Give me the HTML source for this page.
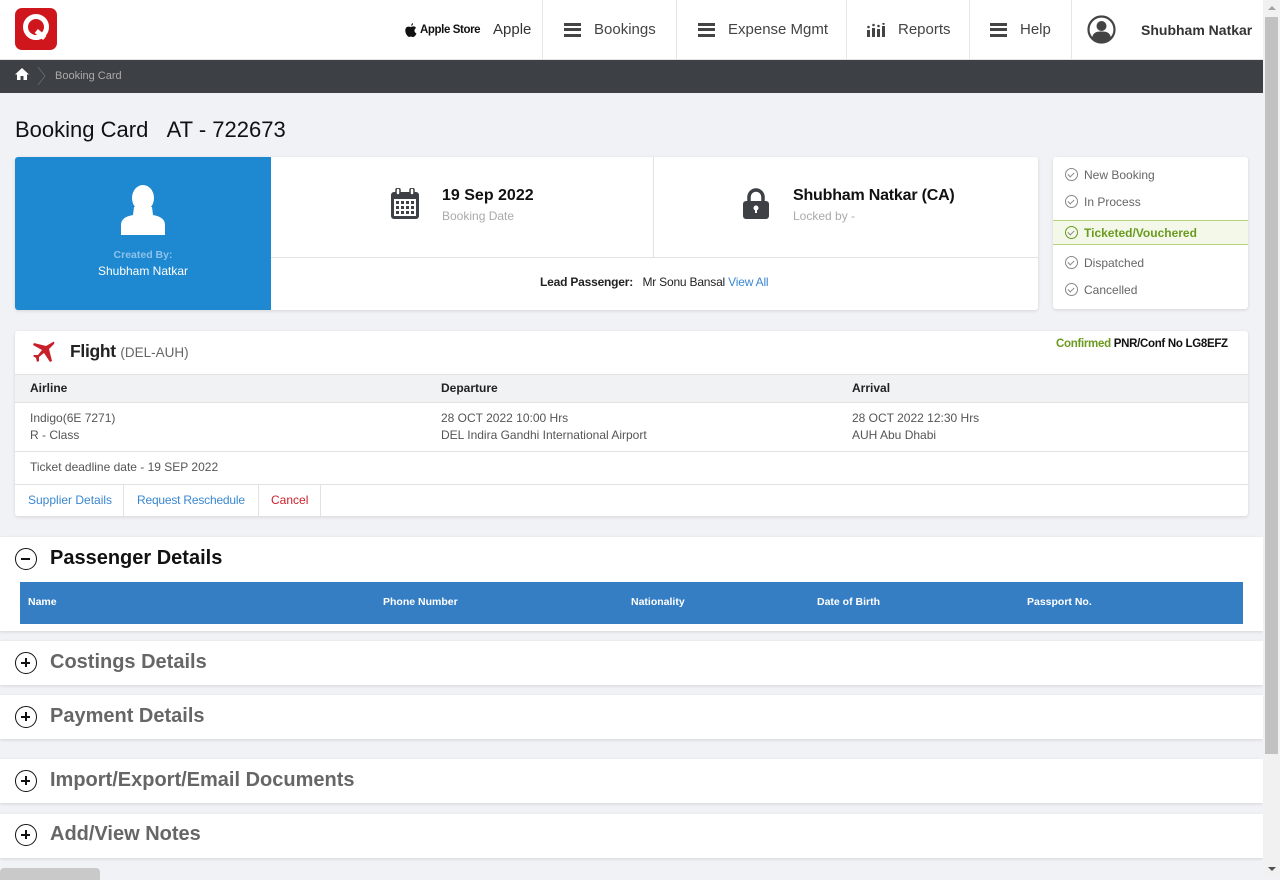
<!DOCTYPE html>
<html><head><meta charset="utf-8">
<style>
*{box-sizing:border-box;margin:0;padding:0}
body{width:1280px;height:878px;overflow:hidden;background:#f1f2f6;font-family:"Liberation Sans",sans-serif;position:relative;color:#333}
.a{position:absolute}
.hdr{left:0;top:0;width:1263px;height:60px;background:#fff;border-bottom:1px solid #e3e3e3}
.nav{top:0;height:59px;border-left:1px solid #e6e6e6;display:flex;align-items:center;font-size:15px;color:#444}
.ham{display:inline-block;width:17px;height:14px;border-top:3px solid #444;border-bottom:3px solid #444;position:relative;margin-right:13px}
.ham:after{content:"";position:absolute;left:0;right:0;top:2.5px;height:3px;background:#444}
.crumb{left:0;top:60px;width:1263px;height:33px;background:#3d4145}
.card{background:#fff;border-radius:3px;box-shadow:0 1px 3px rgba(0,0,0,.12)}
.st{left:1053px;width:195px;height:27px;font-size:12px;color:#666;display:flex;align-items:center;padding-left:12px}
.ck{width:13px;height:13px;border:1.5px solid #888;border-radius:50%;margin-right:6px;position:relative}
.ck:after{content:"";position:absolute;left:3px;top:1.5px;width:3px;height:5px;border-right:1.5px solid #888;border-bottom:1.5px solid #888;transform:rotate(45deg)}
.sec{left:0;width:1263px;background:#fff;box-shadow:0 1px 3px rgba(0,0,0,.12)}
.sec .t{position:absolute;left:50px;font-size:20px;font-weight:bold;color:#666}
.pl{position:absolute;left:15px;width:22px;height:22px;border:1.5px solid #111;border-radius:50%}
.pl:before{content:"";position:absolute;left:5px;top:9px;width:9px;height:1.5px;background:#111}
.pl.p:after{content:"";position:absolute;left:9px;top:5px;width:1.5px;height:9px;background:#111}
.th{font-size:12px;font-weight:bold;color:#222}
.sm{font-size:12px;color:#555}
</style></head><body>
<div class="a hdr"></div>
<div class="a" style="left:15px;top:8px;width:42px;height:42px;background:#d0161d;border-radius:7px"></div>
<div class="a" style="left:23px;top:14px;width:26px;height:26px;border:5px solid #fff;border-radius:50%"></div>
<div class="a" style="left:35px;top:32px;width:11px;height:5px;background:#fff;transform:rotate(40deg)"></div>
<svg class="a" style="left:405px;top:23px" width="12" height="14" viewBox="0 0 12 14"><path d="M8 0 Q8.3 2 6.3 3 Q6 1 8 0Z M6 4 Q8 3 9.5 3.5 Q10.7 4 11 5 Q9.3 6 9.5 8 Q9.8 9.8 11.5 10.3 Q10.5 13 9 13.8 Q8 14.2 6.8 13.7 Q6 13.4 5 13.7 Q3.8 14.2 3 13.5 Q0 10.5 0.3 7 Q0.6 4 3 3.6 Q4.3 3.5 6 4Z" fill="#111"/></svg>
<div class="a" style="left:420px;top:24px;font-size:11.5px;color:#111;font-weight:bold;letter-spacing:-.4px">Apple Store</div>
<div class="a" style="left:493px;top:21px;font-size:15px;color:#333">Apple</div>
<div class="a nav" style="left:542px;width:134px;padding-left:21px"><span class="ham"></span>Bookings</div>
<div class="a nav" style="left:676px;width:170px;padding-left:21px"><span class="ham"></span>Expense Mgmt</div>
<div class="a nav" style="left:846px;width:123px;padding-left:20px"><svg width="18" height="14" style="margin-right:13px" viewBox="0 0 18 14" fill="#444"><rect x="0" y="7" width="3" height="7"/><rect x="5" y="5" width="3" height="9"/><rect x="10" y="6" width="3" height="8"/><rect x="15" y="3" width="3" height="11"/><circle cx="1.5" cy="4" r="1.3"/><circle cx="6.5" cy="2" r="1.3"/><circle cx="11.5" cy="3" r="1.3"/><circle cx="16.5" cy="0.8" r="1.2"/></svg>Reports</div>
<div class="a nav" style="left:969px;width:102px;padding-left:20px"><span class="ham"></span>Help</div>
<div class="a nav" style="left:1071px;width:192px;padding-left:15px"><svg width="29" height="29" viewBox="0 0 29 29" style="margin-right:25px"><circle cx="14.5" cy="14.5" r="13" fill="none" stroke="#444" stroke-width="2.2"/><circle cx="14.5" cy="11" r="5" fill="#444"/><path d="M5 23 Q6 16 14.5 16.5 Q23 16 24 23 Q20 27 14.5 27 Q9 27 5 23Z" fill="#444"/></svg><b style="color:#333;font-size:14px">Shubham Natkar</b></div>
<div class="a crumb"></div>
<svg class="a" style="left:15px;top:68px" width="14" height="12" viewBox="0 0 14 12"><path d="M7 0 L14 6.5 L12 6.5 L12 12 L8.5 12 L8.5 8 L5.5 8 L5.5 12 L2 12 L2 6.5 L0 6.5Z" fill="#fff"/></svg>
<svg class="a" style="left:37px;top:66px" width="10" height="20"><path d="M1 1 L8 10 L1 19" stroke="#666" fill="none"/></svg>
<div class="a" style="left:55px;top:70px;font-size:11px;color:#aaa">Booking Card</div>
<div class="a" style="left:15px;top:117px;font-size:22px;color:#111">Booking Card&nbsp;&nbsp;&nbsp;AT - 722673</div>

<div class="a card" style="left:15px;top:157px;width:1023px;height:153px"></div>
<div class="a" style="left:15px;top:157px;width:256px;height:153px;background:#1e88d0;border-radius:3px 0 0 3px"></div>
<svg class="a" style="left:120px;top:185px" width="46" height="50" viewBox="0 0 46 50"><ellipse cx="23" cy="13" rx="11" ry="13" fill="#fff"/><path d="M14 22 L32 22 L33 30 Q45 32 45 40 L45 50 L1 50 L1 40 Q1 32 13 30Z" fill="#fff"/></svg>
<div class="a" style="left:15px;top:249px;width:256px;text-align:center;font-size:10.5px;font-weight:bold;color:#8cc3ea">Created By:</div>
<div class="a" style="left:15px;top:264px;width:256px;text-align:center;font-size:12px;color:#fff">Shubham Natkar</div>
<div class="a" style="left:653px;top:157px;width:1px;height:100px;background:#e2e2e2"></div>
<div class="a" style="left:271px;top:257px;width:767px;height:1px;background:#e2e2e2"></div>
<svg class="a" style="left:391px;top:188px" width="28" height="31" viewBox="0 0 28 31"><rect x="0" y="4" width="28" height="27" rx="3" fill="#3d4145"/><rect x="3" y="11" width="22" height="17" fill="#fff"/><g fill="#3d4145"><rect x="5" y="13" width="3" height="3"/><rect x="10" y="13" width="3" height="3"/><rect x="15" y="13" width="3" height="3"/><rect x="20" y="13" width="3" height="3"/><rect x="5" y="18" width="3" height="3"/><rect x="10" y="18" width="3" height="3"/><rect x="15" y="18" width="3" height="3"/><rect x="20" y="18" width="3" height="3"/><rect x="5" y="23" width="3" height="3"/><rect x="10" y="23" width="3" height="3"/><rect x="15" y="23" width="3" height="3"/><rect x="20" y="23" width="3" height="3"/></g><rect x="5" y="0" width="4" height="7" rx="2" fill="#fff" stroke="#3d4145" stroke-width="1.5"/><rect x="19" y="0" width="4" height="7" rx="2" fill="#fff" stroke="#3d4145" stroke-width="1.5"/></svg>
<div class="a" style="left:442px;top:187px;font-size:16px;font-weight:bold;color:#111">19 Sep 2022</div>
<div class="a" style="left:442px;top:209px;font-size:12px;color:#aaa">Booking Date</div>
<svg class="a" style="left:743px;top:188px" width="26" height="31" viewBox="0 0 26 31"><path d="M6 14 V9 A7 7 0 0 1 20 9 V14" stroke="#3d4145" stroke-width="3.5" fill="none"/><rect x="0" y="13" width="26" height="18" rx="3" fill="#3d4145"/><circle cx="13" cy="20" r="2.5" fill="#fff"/><rect x="12" y="20" width="2" height="5" fill="#fff"/></svg>
<div class="a" style="left:793px;top:187px;font-size:16px;font-weight:bold;color:#111;letter-spacing:-.2px">Shubham Natkar (CA)</div>
<div class="a" style="left:793px;top:209px;font-size:12px;color:#aaa">Locked by -</div>
<div class="a" style="left:540px;top:275px;font-size:12px;color:#222;letter-spacing:-.2px"><b>Lead Passenger:</b>&nbsp;&nbsp;&nbsp;Mr Sonu Bansal <span style="color:#3a87d0">View All</span></div>

<div class="a card" style="left:1053px;top:157px;width:195px;height:152px"></div>
<div class="a st" style="top:161px"><span class="ck"></span>New Booking</div>
<div class="a st" style="top:188px"><span class="ck"></span>In Process</div>
<div class="a st" style="top:220px;height:25px;background:#f3f8e8;border-top:1px solid #b5d37a;border-bottom:1px solid #b5d37a;color:#6a9a1f;font-weight:bold"><span class="ck" style="border-color:#6a9a1f"></span>Ticketed/Vouchered</div>
<div class="a st" style="top:249px"><span class="ck"></span>Dispatched</div>
<div class="a st" style="top:276px"><span class="ck"></span>Cancelled</div>

<div class="a card" style="left:15px;top:331px;width:1233px;height:185px"></div>
<svg class="a" style="left:32px;top:341px" width="23" height="22" viewBox="0 0 23 22"><path d="M21 1 Q23 0 22 3 L17 8 L20 20 L18 21 L12 12 L7 16 L7 20 L5 21 L4 17 L1 15 L2 14 L6 14 L10 9 L1 4 L2 2 L14 5 Z" fill="#c8202a"/></svg>
<div class="a" style="left:70px;top:341px;font-size:17.5px;font-weight:bold;color:#222;letter-spacing:-.3px">Flight <span style="font-size:13.5px;font-weight:normal;color:#666;letter-spacing:0">(DEL-AUH)</span></div>
<div class="a" style="left:1056px;top:338px;font-size:11.5px;font-weight:bold;color:#111;letter-spacing:-.3px"><span style="color:#6a9a1f">Confirmed</span> PNR/Conf No LG8EFZ</div>
<div class="a" style="left:15px;top:374px;width:1233px;height:29px;background:#f1f2f4;border-top:1px solid #e2e2e2;border-bottom:1px solid #e2e2e2"></div>
<div class="a th" style="left:30px;top:381px">Airline</div>
<div class="a th" style="left:441px;top:381px">Departure</div>
<div class="a th" style="left:852px;top:381px">Arrival</div>
<div class="a sm" style="left:30px;top:410px;line-height:17px">Indigo(6E 7271)<br>R - Class</div>
<div class="a sm" style="left:441px;top:410px;line-height:17px">28 OCT 2022 10:00 Hrs<br>DEL Indira Gandhi International Airport</div>
<div class="a sm" style="left:852px;top:410px;line-height:17px">28 OCT 2022 12:30 Hrs<br>AUH Abu Dhabi</div>
<div class="a" style="left:15px;top:451px;width:1233px;height:1px;background:#e2e2e2"></div>
<div class="a sm" style="left:30px;top:460px">Ticket deadline date - 19 SEP 2022</div>
<div class="a" style="left:15px;top:484px;width:1233px;height:1px;background:#e2e2e2"></div>
<div class="a" style="left:123px;top:485px;width:1px;height:31px;background:#e2e2e2"></div>
<div class="a" style="left:258px;top:485px;width:1px;height:31px;background:#e2e2e2"></div>
<div class="a" style="left:320px;top:485px;width:1px;height:31px;background:#e2e2e2"></div>
<div class="a" style="left:28px;top:493px;font-size:12px;color:#3a87d0">Supplier Details</div>
<div class="a" style="left:137px;top:493px;font-size:12px;color:#3a87d0;letter-spacing:-.2px">Request Reschedule</div>
<div class="a" style="left:271px;top:493px;font-size:12px;color:#c8202a">Cancel</div>

<div class="a sec" style="top:537px;height:94px"><span class="pl" style="top:11px"></span><span class="t" style="top:10px;color:#111">Passenger Details</span></div>
<div class="a" style="left:20px;top:582px;width:1223px;height:42px;background:#357ec4"></div>
<div class="a" style="left:28px;top:596px;font-size:10.5px;font-weight:bold;color:#fff">Name</div>
<div class="a" style="left:383px;top:596px;font-size:10.5px;font-weight:bold;color:#fff">Phone Number</div>
<div class="a" style="left:631px;top:596px;font-size:10.5px;font-weight:bold;color:#fff">Nationality</div>
<div class="a" style="left:817px;top:596px;font-size:10.5px;font-weight:bold;color:#fff">Date of Birth</div>
<div class="a" style="left:1027px;top:596px;font-size:10.5px;font-weight:bold;color:#fff">Passport No.</div>
<div class="a sec" style="top:641px;height:44px"><span class="pl p" style="top:11px"></span><span class="t" style="top:10px">Costings Details</span></div>
<div class="a sec" style="top:695px;height:44px"><span class="pl p" style="top:11px"></span><span class="t" style="top:10px">Payment Details</span></div>
<div class="a sec" style="top:759px;height:44px"><span class="pl p" style="top:11px"></span><span class="t" style="top:10px">Import/Export/Email Documents</span></div>
<div class="a sec" style="top:814px;height:44px"><span class="pl p" style="top:10px"></span><span class="t" style="top:9px">Add/View Notes</span></div>
<div class="a" style="left:0;top:868px;width:100px;height:12px;background:#c9c9c9;border-radius:4px 4px 0 0"></div>

<div class="a" style="left:1263px;top:0;width:17px;height:878px;background:#f1f1f1"></div>
<div class="a" style="left:1265px;top:17px;width:13px;height:737px;background:#c1c1c1"></div>
<div class="a" style="left:1268px;top:6px;width:0;height:0;border-left:4px solid transparent;border-right:4px solid transparent;border-bottom:4px solid #a3a3a3"></div>
<div class="a" style="left:1268px;top:867px;width:0;height:0;border-left:4px solid transparent;border-right:4px solid transparent;border-top:4px solid #505050"></div>
</body></html>
